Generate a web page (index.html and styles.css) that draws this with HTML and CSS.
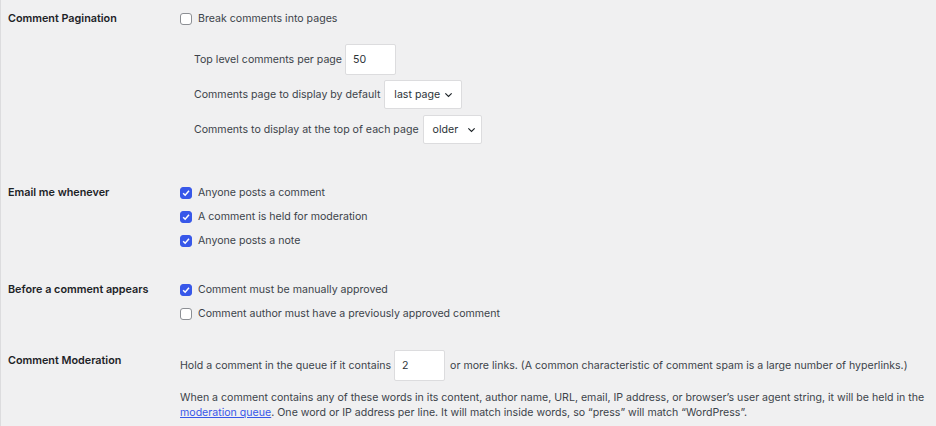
FILE: index.html
```html
<!DOCTYPE html>
<html>
<head>
<meta charset="utf-8">
<link rel="stylesheet" href="styles.css">
</head>
<body>
<div class="page">
  <div class="row row-pagination">
    <div class="label">Comment Pagination</div>
    <div class="field">
      <label class="check"><span class="box"></span>Break comments into pages</label>
      <div class="sub">
        <div class="line l1">Top level comments per page <span class="input w50">50</span></div>
        <div class="line l2">Comments page to display by default <span class="select s-last">last page <svg class="chev" viewBox="0 0 10 6"><path d="M1.5 1.2 5 4.6 8.5 1.2" fill="none" stroke="#1d2327" stroke-width="1.3"/></svg></span></div>
        <div class="line l3">Comments to display at the top of each page <span class="select s-older">older <svg class="chev" viewBox="0 0 10 6"><path d="M1.5 1.2 5 4.6 8.5 1.2" fill="none" stroke="#1d2327" stroke-width="1.3"/></svg></span></div>
      </div>
    </div>
  </div>

  <div class="row row-email">
    <div class="label">Email me whenever</div>
    <div class="field list">
      <label class="check"><span class="box on"><svg viewBox="0 0 12 12"><path d="M2.6 6.2 5 8.6 9.6 3.4" fill="none" stroke="#fff" stroke-width="1.8"/></svg></span>Anyone posts a comment</label>
      <label class="check"><span class="box on"><svg viewBox="0 0 12 12"><path d="M2.6 6.2 5 8.6 9.6 3.4" fill="none" stroke="#fff" stroke-width="1.8"/></svg></span>A comment is held for moderation</label>
      <label class="check"><span class="box on"><svg viewBox="0 0 12 12"><path d="M2.6 6.2 5 8.6 9.6 3.4" fill="none" stroke="#fff" stroke-width="1.8"/></svg></span>Anyone posts a note</label>
    </div>
  </div>

  <div class="row row-before">
    <div class="label">Before a comment appears</div>
    <div class="field list">
      <label class="check"><span class="box on"><svg viewBox="0 0 12 12"><path d="M2.6 6.2 5 8.6 9.6 3.4" fill="none" stroke="#fff" stroke-width="1.8"/></svg></span>Comment must be manually approved</label>
      <label class="check"><span class="box"></span>Comment author must have a previously approved comment</label>
    </div>
  </div>

  <div class="row row-mod">
    <div class="label">Comment Moderation</div>
    <div class="field">
      <div class="line hold">Hold a comment in the queue if it contains <span class="input w2">2</span> or more links. (A common characteristic of comment spam is a large number of hyperlinks.)</div>
      <p class="desc">When a comment contains any of these words in its content, author name, URL, email, IP address, or browser’s user agent string, it will be held in the <a href="#">moderation queue</a>. One word or IP address per line. It will match inside words, so “press” will match “WordPress”.</p>
    </div>
  </div>
</div>
</body>
</html>
```
FILE: styles.css
```css
html, body {
  margin: 0;
  padding: 0;
  background: #f0f0f1;
}
body {
  font-family: Inter, "Noto Sans", sans-serif;
  font-size: 10.6px;
  color: #3c434a;
  width: 936px;
  height: 426px;
  overflow: hidden;
}
.page {
  border-left: 1px solid #dcdcde;
  padding-left: 7px;
  height: 426px;
  box-sizing: border-box;
}
.row {
  display: flex;
}
.label {
  width: 172px;
  flex: none;
  font-size: 10.8px;
  font-weight: 600;
  color: #1d2327;
  line-height: 14px;
}
.field {
  flex: 1;
}
.check {
  display: flex;
  align-items: center;
  height: 14px;
  line-height: 14px;
}
.box {
  width: 12px;
  height: 12px;
  box-sizing: border-box;
  border: 1px solid #8c8f94;
  border-radius: 3px;
  background: #fff;
  margin-right: 6px;
  flex: none;
  display: flex;
}
.box.on {
  background: #3858e9;
  border-color: #3858e9;
}
.box svg {
  width: 10px;
  height: 10px;
}
.row-pagination {
  padding-top: 12px;
}
.sub {
  padding-left: 14px;
  padding-top: 18px;
}
.line {
  display: flex;
  align-items: center;
  white-space: nowrap;
}
.input, .select {
  display: inline-flex;
  align-items: center;
  background: #fff;
  border: 1px solid #dcdcde;
  border-radius: 2px;
  box-sizing: border-box;
  color: #2c3338;
  margin-left: 3px;
}
.w50 {
  width: 51px;
  height: 31px;
  padding-left: 7px;
}
.l2 { margin-top: 5px; }
.l3 { margin-top: 6px; }
.select {
  height: 29px;
  padding-left: 9px;
  margin-left: 4px;
}
.s-last { width: 78px; }
.s-older { width: 59px; }
.chev {
  width: 9px;
  height: 6px;
  margin-left: 4px;
}
.s-older .chev { margin-left: 9px; }
.row-email {
  padding-top: 42px;
}
.list .check + .check {
  margin-top: 10px;
}
.row-before {
  padding-top: 35px;
}
.row-mod {
  padding-top: 33px;
}
.hold {
  margin-top: -4px;
}
.w2 {
  width: 51px;
  height: 31px;
  padding-left: 7px;
  margin: 0 5px 0 3px;
}
.desc {
  margin: 9px 0 0;
  line-height: 15px;
  width: 752px;
}
.desc a {
  color: #3858e9;
}
```
